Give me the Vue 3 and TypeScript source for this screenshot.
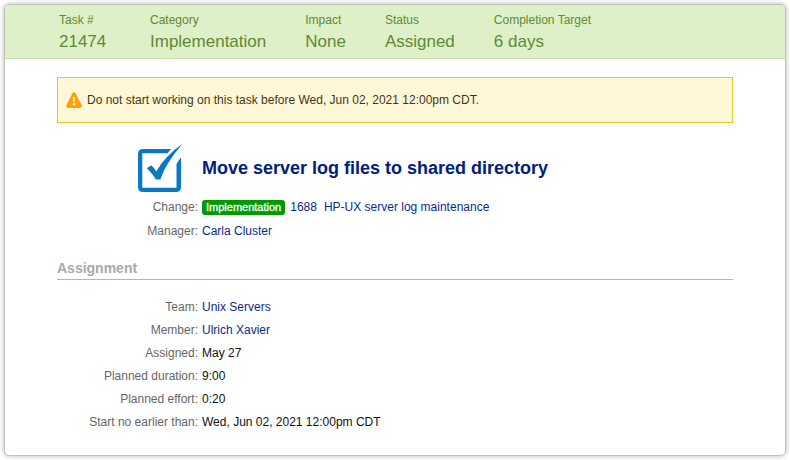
<script setup lang="ts">
interface Fact {
  label: string
  value: string
  link?: boolean
}

const summary: Fact[] = [
  { label: 'Task #', value: '21474' },
  { label: 'Category', value: 'Implementation' },
  { label: 'Impact', value: 'None' },
  { label: 'Status', value: 'Assigned' },
  { label: 'Completion Target', value: '6 days' },
]

const assignment: Fact[] = [
  { label: 'Team', value: 'Unix Servers', link: true },
  { label: 'Member', value: 'Ulrich Xavier', link: true },
  { label: 'Assigned', value: 'May 27' },
  { label: 'Planned duration', value: '9:00' },
  { label: 'Planned effort', value: '0:20' },
  { label: 'Start no earlier than', value: 'Wed, Jun 02, 2021 12:00pm CDT' },
]
</script>

<template>
  <main class="card">
    <header>
      <dl class="summary">
        <div v-for="item in summary" :key="item.label" class="summary-item">
          <dt>{{ item.label }}</dt>
          <dd>{{ item.value }}</dd>
        </div>
      </dl>
    </header>

    <div class="content">
      <p class="notice" role="status">
        <svg class="notice-icon" viewBox="0 0 16 16" aria-hidden="true">
          <path d="M6.6 1Q8 -1 9.400 1L15.600 13Q16.300 16 14 16H2Q-.300 16 .4 13Z" fill="#ffa20a" />
          <path d="M7 5H9L8.700 10H7.300Z" fill="#fff8d8" />
          <circle cx="8" cy="12.300" r="1.200" fill="#fff8d8" />
        </svg>
        <span>Do not start working on this task before Wed, Jun 02, 2021 12:00pm CDT.</span>
      </p>

      <div class="heading">
        <svg class="task-icon" viewBox="0 0 46 50" aria-hidden="true">
          <path
            d="M34 6H6Q1 6 1 11V44Q1 49 6 49H39Q44 49 44 44V14.500Q41.500 17.500 39.500 21V44.700H5.300V10.200H30.500Z"
            fill="#0a78c3"
          />
          <path
            d="M10 25.500Q12 23 14.500 22.500Q17.500 25 19.300 28.500Q24 20 30 14Q37 6.500 45.300 1Q38 9.500 32 18.700Q26.500 27 23.300 36.500H19Q15 30 10 25.500Z"
            fill="#0a78c3"
          />
        </svg>
        <h1>Move server log files to shared directory</h1>
      </div>

      <dl class="facts relations">
        <dt>Change:</dt>
        <dd>
          <span class="badge">Implementation</span>
          <a href="#change" class="change"><span>1688</span><span>HP-UX server log maintenance</span></a>
        </dd>
        <dt>Manager:</dt>
        <dd><a href="#manager">Carla Cluster</a></dd>
      </dl>

      <h2>Assignment</h2>
      <dl class="facts">
        <template v-for="item in assignment" :key="item.label">
          <dt>{{ item.label }}:</dt>
          <dd>
            <a v-if="item.link" href="#person">{{ item.value }}</a>
            <template v-else>{{ item.value }}</template>
          </dd>
        </template>
      </dl>
    </div>
  </main>
</template>

<style>
body {
  background: #fff;
}
</style>

<style scoped>
.card {
  margin: 4px;
  border: 1px solid #c0c0c0;
  border-radius: 5px;
  overflow: hidden;
  background: #fff;
  box-shadow: 0 0 5px rgba(0, 0, 0, 0.3);
  color: #111;
  font: 12px/23px "Liberation Sans", Arial, sans-serif;
}

dl,
dd,
p,
h1,
h2 {
  margin: 0;
}

header {
  padding: 6px 53px 4px 54px;
  border-bottom: 1px solid #c8e0b0;
  background: #ddf0c8;
  color: #5e8a35;
}

.summary {
  display: flex;
  gap: 39px;
}

.summary-item:first-child {
  min-width: 52px;
}

.summary dt {
  font-size: 12px;
  line-height: 18px;
}

.summary dd {
  font-size: 17px;
  line-height: 25px;
}

.content {
  padding: 18px 52px 21px;
}

.notice {
  display: flex;
  align-items: center;
  gap: 5px;
  padding: 10px 8px;
  border: 1px solid #dfc92b;
  background: #fff7d6;
  color: #43361a;
  line-height: 24px;
}

.notice-icon {
  width: 16px;
  height: 16px;
}

.heading {
  display: flex;
  align-items: center;
  gap: 19px;
  margin-top: 20px;
  padding-left: 80px;
}

.task-icon {
  width: 46px;
  height: 50px;
}

h1 {
  color: #00207f;
  font-size: 18px;
  line-height: 24px;
}

.facts {
  display: grid;
  grid-template-columns: 141px 1fr;
  column-gap: 4px;
}

.facts dt {
  color: #666;
  text-align: right;
}

.facts dd {
  display: flex;
  align-items: center;
}

.relations {
  margin-top: 3px;
  row-gap: 1px;
}

a {
  color: #0b2a8c;
  text-decoration: none;
}

.badge {
  margin-right: 5px;
  padding: 0 4px;
  border-radius: 3px;
  background: #090;
  color: #fff;
  font-size: 11px;
  line-height: 15px;
  -webkit-text-stroke: 0.3px #fff;
}

.change {
  display: flex;
  gap: 7px;
}

h2 {
  margin: 15px 0 16px;
  border-bottom: 1px solid #b5b5b5;
  color: #aaa;
  font-size: 14px;
  line-height: 21px;
}
</style>
